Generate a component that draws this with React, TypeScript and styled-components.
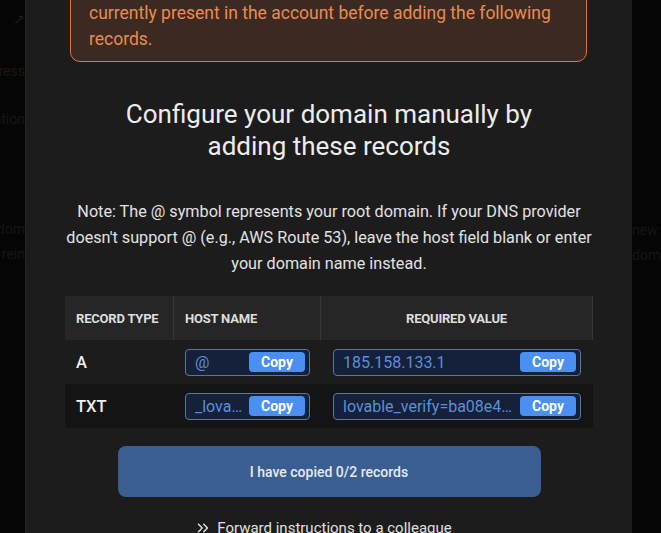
import React from 'react'
import styled, { createGlobalStyle } from 'styled-components'
import { ChevronsRight } from 'lucide-react'

const GlobalStyle = createGlobalStyle`
  html, body {
    margin: 0;
    padding: 0;
    background: #050505;
    font-family: Roboto, 'Liberation Sans', sans-serif;
  }
  #root {
    height: 533px;
  }
`

const Screen = styled.div`
  display: grid;
  grid-template-columns: 25px 607px 29px;
  height: 533px;
  overflow: hidden;
`

const Backdrop = styled.div<{ $side: 'left' | 'right' }>`
  display: flex;
  flex-direction: column;
  align-items: ${(p) => (p.$side === 'left' ? 'flex-end' : 'flex-start')};
  overflow: hidden;
  font-size: 14px;
  white-space: nowrap;
`

const Ghost = styled.div<{ $top: number; $tint?: string }>`
  margin-top: ${(p) => p.$top}px;
  line-height: 18px;
  color: ${(p) => p.$tint || '#151515'};
`

const Modal = styled.div`
  background: #1c1c1c;
  border-left: 1px solid #242424;
  padding: 0 39px 0 39px;
  overflow: hidden;
`

const Content = styled.div`
  margin-top: -37px;
  display: flex;
  flex-direction: column;
  align-items: center;
`

const Warning = styled.div`
  align-self: stretch;
  margin: 0 6px 0 5px;
  padding: 10px 18px 9px;
  border: 1.5px solid #d9773c;
  border-radius: 10px;
  background: #3a2a22;
  color: #ec8a50;
  font-size: 17.5px;
  line-height: 26px;
`

const Heading = styled.h2`
  margin: 36px 0 0;
  font-size: 26px;
  font-weight: 400;
  line-height: 32px;
  color: #ececec;
  text-align: center;
`

const Note = styled.p`
  margin: 37px 0 0;
  font-size: 16.2px;
  line-height: 26px;
  color: #e2e2e2;
  text-align: center;
`

const Table = styled.div`
  align-self: stretch;
  margin-top: 19px;
  display: grid;
  grid-template-columns: 109px 147px minmax(0, 1fr);
`

const HeadCell = styled.div<{ $center?: boolean }>`
  height: 44px;
  display: flex;
  align-items: center;
  justify-content: ${(p) => (p.$center ? 'center' : 'flex-start')};
  padding: 0 11px;
  background: #262626;
  border-right: 1px solid #363636;
  font-size: 13px;
  font-weight: 700;
  color: #dedede;
  letter-spacing: -0.2px;
  &:last-child {
    border-right-color: #3c3c3c;
  }
`

const Cell = styled.div<{ $dark?: boolean; $wide?: boolean }>`
  height: 44px;
  min-width: 0;
  display: flex;
  align-items: center;
  padding: 0 ${(p) => (p.$wide ? 12 : 11)}px;
  background: ${(p) => (p.$dark ? '#141414' : '#1c1c1c')};
  font-size: 16.5px;
  font-weight: 500;
  color: #f0f0f0;
`

const Field = styled.div`
  flex: 1;
  min-width: 0;
  height: 27px;
  box-sizing: border-box;
  display: flex;
  align-items: center;
  gap: 4px;
  padding: 0 4px 0 9px;
  border: 1px solid #56789f;
  border-radius: 4px;
  background: #15203a;
`

const FieldText = styled.span`
  flex: 1;
  min-width: 0;
  overflow: hidden;
  white-space: nowrap;
  text-overflow: ellipsis;
  font-size: 16px;
  font-weight: 400;
  color: #5b8fd9;
`

const CopyButton = styled.button`
  flex: none;
  width: 56px;
  height: 20px;
  padding: 0;
  border: none;
  border-radius: 4px;
  background: #4a8ff2;
  color: #fff;
  font-family: inherit;
  font-size: 14px;
  font-weight: 700;
  cursor: pointer;
`

const Primary = styled.button`
  margin-top: 18px;
  width: 423px;
  height: 51px;
  border: none;
  border-radius: 8px;
  background: #3a5e92;
  color: #e6e9ee;
  font-family: inherit;
  font-size: 14px;
  font-weight: 500;
  cursor: pointer;
`

const Forward = styled.div`
  margin-top: 20px;
  margin-left: -12px;
  display: flex;
  align-items: center;
  gap: 5px;
  font-size: 15px;
  line-height: 22px;
  color: #e0e0e0;
`

const records = [
  { type: 'A', host: '@', value: '185.158.133.1' },
  { type: 'TXT', host: '_lovable', value: 'lovable_verify=ba08e4c2f1d7' },
]

export default function App() {
  return (
    <>
      <GlobalStyle />
      <Screen>
        <Backdrop $side="left">
          <Ghost $top={10} $tint="#1c1c1c">↗</Ghost>
          <Ghost $top={34} $tint="#1c170f">Address</Ghost>
          <Ghost $top={30}>Information</Ghost>
          <Ghost $top={92}>Custom dom</Ghost>
          <Ghost $top={7}>Domain rein</Ghost>
        </Backdrop>
        <Modal>
          <Content>
            <Warning>
              Remove any existing A or TXT records for this host that are
              <br />
              currently present in the account before adding the following records.
            </Warning>
            <Heading>
              Configure your domain manually by
              <br />
              adding these records
            </Heading>
            <Note>
              Note: The @ symbol represents your root domain. If your DNS provider doesn't support @
              (e.g., AWS Route 53), leave the host field blank or enter your domain name instead.
            </Note>
            <Table>
              <HeadCell>RECORD TYPE</HeadCell>
              <HeadCell>HOST NAME</HeadCell>
              <HeadCell $center>REQUIRED VALUE</HeadCell>
              {records.map((r, i) => (
                <React.Fragment key={r.type}>
                  <Cell $dark={i % 2 === 1}>{r.type}</Cell>
                  <Cell $dark={i % 2 === 1}>
                    <Field>
                      <FieldText>{r.host}</FieldText>
                      <CopyButton>Copy</CopyButton>
                    </Field>
                  </Cell>
                  <Cell $dark={i % 2 === 1} $wide>
                    <Field>
                      <FieldText>{r.value}</FieldText>
                      <CopyButton>Copy</CopyButton>
                    </Field>
                  </Cell>
                </React.Fragment>
              ))}
            </Table>
            <Primary>I have copied 0/2 records</Primary>
            <Forward>
              <ChevronsRight size={18} strokeWidth={2} />
              Forward instructions to a colleague
            </Forward>
          </Content>
        </Modal>
        <Backdrop $side="right">
          <Ghost $top={221}>new domain</Ghost>
          <Ghost $top={7}>domain</Ghost>
        </Backdrop>
      </Screen>
    </>
  )
}
